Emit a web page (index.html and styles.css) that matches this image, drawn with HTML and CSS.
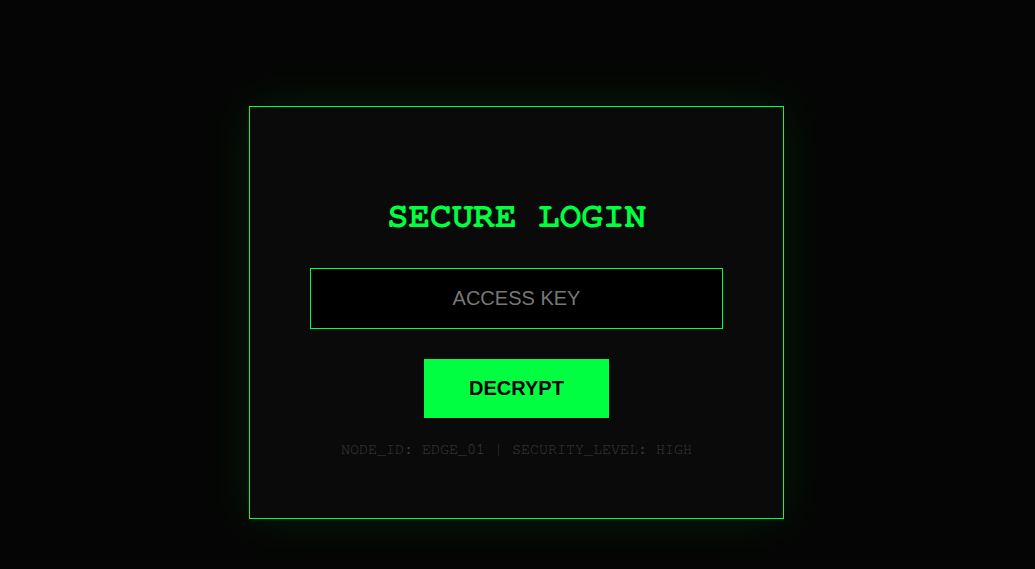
FILE: index.html
```html
<!DOCTYPE html>
<html lang="en">
<head>
<meta charset="utf-8">
<title>Secure Login</title>
<link rel="stylesheet" href="styles.css">
</head>
<body>
<main class="page">
  <section class="card">
    <h1 class="title">SECURE LOGIN</h1>
    <input class="key-input" type="password" placeholder="ACCESS KEY">
    <button class="decrypt-btn" type="button">DECRYPT</button>
    <p class="status">NODE_ID: EDGE_01 | SECURITY_LEVEL: HIGH</p>
  </section>
</main>
</body>
</html>
```
FILE: styles.css
```css
html, body {
  margin: 0;
  padding: 0;
  background: #050505;
  height: 100%;
}
body {
  font-family: "Liberation Sans", Arial, sans-serif;
}
.page {
  display: flex;
  justify-content: center;
  align-items: flex-start;
  padding: 106px 2px 0 0;
  box-sizing: border-box;
}
.card {
  width: 535px;
  box-sizing: border-box;
  border: 1px solid #00ff41;
  background: #0a0a0a;
  box-shadow: 0 0 50px rgba(0, 255, 65, 0.1);
  padding: 89px 60px 60px;
  display: flex;
  flex-direction: column;
  align-items: center;
}
.title {
  margin: 0 0 32px;
  font-family: "Nimbus Mono PS", "Nimbus Mono L", FreeMono, "Courier 10 Pitch", "Liberation Mono", monospace;
  font-weight: bold;
  font-size: 36px;
  line-height: 40px;
  color: #00ff41;
  text-align: center;
}
.key-input {
  width: 100%;
  height: 61px;
  box-sizing: border-box;
  margin: 0 0 30px;
  border: 1px solid #00ff41;
  background: #000;
  color: #00ff41;
  font-family: "Liberation Sans", Arial, sans-serif;
  font-size: 20px;
  text-align: center;
  outline: none;
  padding: 0 10px;
}
.key-input::placeholder {
  color: #777;
  opacity: 1;
}
.decrypt-btn {
  width: 185px;
  height: 59px;
  border: none;
  background: #00ff41;
  color: #000;
  font-family: "Liberation Sans", Arial, sans-serif;
  font-weight: bold;
  font-size: 20px;
  margin: 0 0 23px;
  padding: 0;
  cursor: pointer;
}
.status {
  margin: 0;
  font-family: "Nimbus Mono PS", "Nimbus Mono L", FreeMono, "Courier 10 Pitch", "Liberation Mono", monospace;
  font-size: 15px;
  line-height: 17px;
  color: #3d3d3d;
  text-align: center;
  white-space: nowrap;
}
```
